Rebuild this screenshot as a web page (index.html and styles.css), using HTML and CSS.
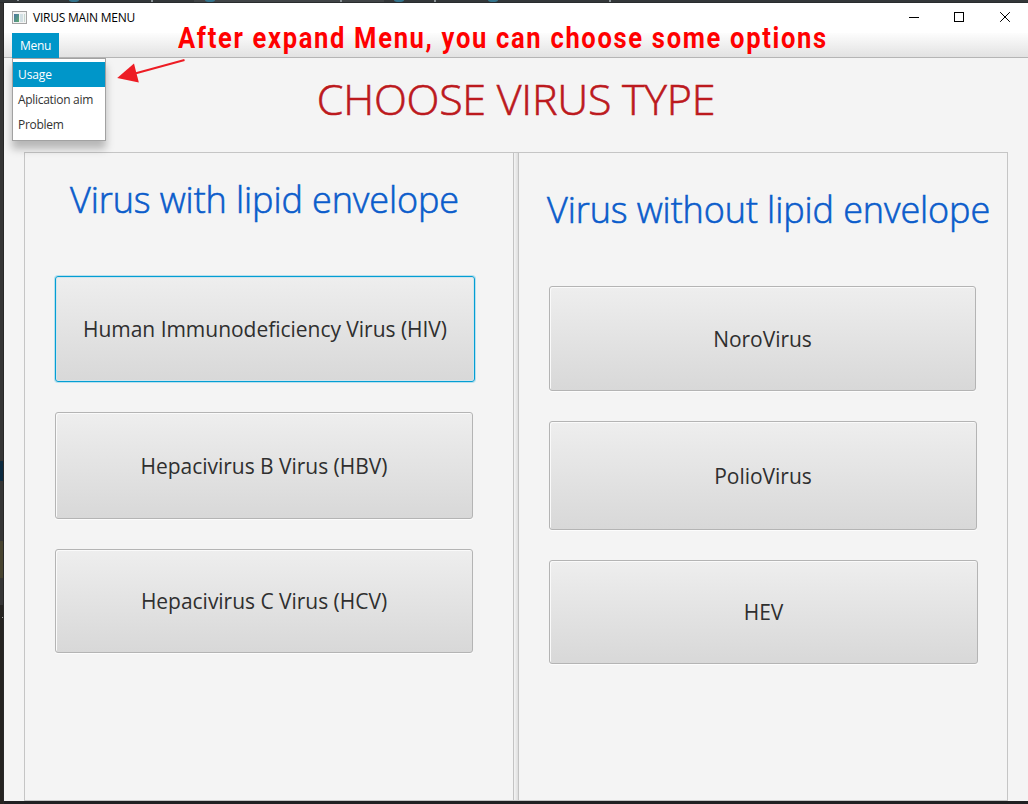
FILE: index.html
```html
<!DOCTYPE html>
<html lang="en">
<head>
<meta charset="utf-8">
<title>VIRUS MAIN MENU</title>
<link rel="stylesheet" href="styles.css">
</head>
<body>
<div class="desktop">
  <svg class="backdrop" width="1028" height="804" viewBox="0 0 1028 804" aria-hidden="true">
    <rect width="1028" height="3" fill="#333739"/>
    <rect x="194" width="190" height="2" fill="#404446"/>
    <g fill="#35748c"><ellipse cx="74" cy="0" rx="5" ry="2"/><ellipse cx="210" cy="0" rx="5" ry="2"/><ellipse cx="399" cy="0" rx="5" ry="2"/><ellipse cx="493" cy="0" rx="5" ry="2"/></g>
    <g fill="#8a9296"><rect x="17" width="2" height="1"/><rect x="151" width="2" height="2"/><rect x="340" width="2" height="2"/><rect x="434" width="2" height="2"/><rect x="609" width="2" height="2"/></g>
    <rect y="2" width="1028" height="1" fill="#292c2e"/>
    <rect y="3" width="4" height="602" fill="#353535"/>
    <rect y="461" width="3" height="20" fill="#0c2a40"/>
    <rect y="541" width="4" height="37" fill="#47432f"/>
    <rect y="605" width="4" height="199" fill="#252320"/>
    <rect x="2" y="617" width="2" height="1" fill="#aaa"/>
    <rect x="3" y="3" width="1" height="801" fill="#282828"/>
  </svg>
  <main class="window">
    <header class="titlebar">
      <svg class="app-icon" width="15" height="13" viewBox="0 0 15 13">
        <defs><linearGradient id="pic" x2="1" y2="1"><stop stop-color="#4a75a5"/><stop offset="1" stop-color="#5faa70"/></linearGradient></defs>
        <rect x=".5" y=".5" width="14" height="12" fill="#f4f4f4" stroke="#a5a5a5"/>
        <rect x="2" y="3" width="5" height="8" fill="url(#pic)"/>
        <rect x="8" y="3" width="3" height="8" fill="#d3e0e4"/><rect x="12" y="3" width="1" height="8" fill="#c5d8d0"/>
      </svg>
      <span class="caption">VIRUS MAIN MENU</span>
      <svg class="controls" width="102" height="11" viewBox="0 0 102 11" shape-rendering="crispEdges">
        <path d="M0 5.5H10M45.500 .5h9v9h-9z" fill="none" stroke="#000"/>
        <path d="M91.500 .5l9 9M100.500 .5l-9 9" stroke="#000" stroke-linecap="square" shape-rendering="auto"/>
      </svg>
    </header>
    <nav class="menubar">
      <div class="menu-button">Menu</div>
      <ul class="dropdown">
        <li class="selected">Usage</li><li>Aplication aim</li><li>Problem</li>
      </ul>
    </nav>
    <h1 class="title">CHOOSE VIRUS TYPE</h1>
    <div class="split">
      <section class="pane enveloped">
        <h2>Virus with lipid envelope</h2>
        <button class="virus hiv">Human Immunodeficiency Virus (HIV)</button>
        <button class="virus hbv">Hepacivirus B Virus (HBV)</button>
        <button class="virus hcv">Hepacivirus C Virus (HCV)</button>
      </section>
      <div class="divider"></div>
      <section class="pane naked">
        <h2>Virus without lipid envelope</h2>
        <button class="virus noro">NoroVirus</button>
        <button class="virus polio">PolioVirus</button>
        <button class="virus hev">HEV</button>
      </section>
    </div>
  </main>
  <p class="note">After expand Menu, you can choose some options</p>
  <svg class="arrow" width="70" height="26" viewBox="0 0 70 26">
    <path d="M67.500 2L18 15.500" stroke="#ed1c24" stroke-width="2"/>
    <path d="M.2 20L17 5.500L21.800 24.500Z" fill="#ed1c24"/>
  </svg>
</div>
</body>
</html>
```
FILE: styles.css
```css
* { box-sizing: border-box; }
body { margin: 0; font-family: "Open Sans", "Noto Sans", sans-serif; }
.desktop { position: relative; width: 1028px; height: 804px; padding: 3px 0 3px 4px; background: #202022; overflow: hidden; }
.backdrop { position: absolute; left: 0; top: 0; }
.window { position: relative; height: 798px; background: #f4f4f4; display: flex; flex-direction: column; }
.titlebar { height: 30px; flex: none; background: #fff; display: flex; align-items: center; padding: 0 17px 1px 8px; }
.app-icon { margin-right: 6px; }
.caption { font-size: 12px; letter-spacing: -0.23px; color: #000; white-space: nowrap; }
.controls { margin-left: auto; }
.menubar { position: relative; height: 25px; flex: none; padding-left: 8px; border-bottom: 1px solid #b5b5b5; background: linear-gradient(#fdfdfd, #e2e2e2); }
.menu-button { width: 47px; height: 25px; padding-left: 8px; background: #0096c9; color: #fff; font-size: 12px; line-height: 25px; letter-spacing: -0.3px; }
.dropdown { position: absolute; left: 8px; top: 25px; z-index: 2; width: 94px; height: 83px; margin: 0; padding: 3px 0 0; list-style: none; background: #fff; border: 1px solid #a2a2a2; box-shadow: 0 8px 8px rgba(0,0,0,.25); font-size: 12px; line-height: 25px; letter-spacing: -0.3px; color: #333; }
.dropdown li { height: 25px; padding-left: 5px; white-space: nowrap; }
.dropdown .selected { background: #0096c9; color: #fff; letter-spacing: -0.1px; }
.title { height: 94px; flex: none; margin: 0; padding-top: 11px; text-align: center; color: #bc191d; font-size: 43px; line-height: 60px; font-weight: 300; letter-spacing: -0.25px; white-space: nowrap; -webkit-text-stroke: 0.6px #bc191d; }
.split { display: flex; width: 984px; height: 649px; margin-left: 20px; border: 1px solid #c5c5c5; }
.pane { display: flex; flex-direction: column; }
.enveloped { width: 488px; padding-left: 30px; }
.naked { width: 488px; padding-left: 30px; }
.divider { width: 6px; border: solid #c3c3c3; border-width: 0 1px; background: linear-gradient(90deg, #f4f4f4, #dedede); }
.pane h2 { margin: 0; height: 50px; color: #0a5ccb; font-size: 36px; line-height: 50px; font-weight: 300; letter-spacing: -0.1px; white-space: nowrap; -webkit-text-stroke: 0.6px #0a5ccb; }
.enveloped h2 { margin: 22px 0 51px 15px; }
.naked h2 { margin: 32px 0 51px -2px; }
.virus { flex: none; padding: 0; margin: 0 0 30px; border: 1px solid #b4b4b4; border-radius: 3px; background: linear-gradient(#eeeeee, #d8d8d8); box-shadow: inset 1px 1px 0 #fafafa, 0 1px 0 #fcfcfc; color: #2f2f2f; font: 400 21px/30px "Open Sans", "Noto Sans", sans-serif; letter-spacing: -0.03px; white-space: nowrap; }
.hiv { width: 420px; height: 106px; border-color: #039ed3; box-shadow: inset 0 0 0 1px #d2e4ec, 0 0 0 1px #b8e0ee; }
.hbv { width: 418px; height: 107px; }
.hcv { width: 418px; height: 104px; }
.noro { width: 427px; height: 105px; }
.polio { width: 428px; height: 109px; }
.hev { width: 429px; height: 104px; }
.note { position: absolute; left: 178px; top: 18px; margin: 0; color: #f00; font: 700 29px/40px Roboto, sans-serif; letter-spacing: 1.9px; white-space: nowrap; transform: scaleX(.881); transform-origin: left; }
.arrow { position: absolute; left: 117px; top: 58px; }
```
